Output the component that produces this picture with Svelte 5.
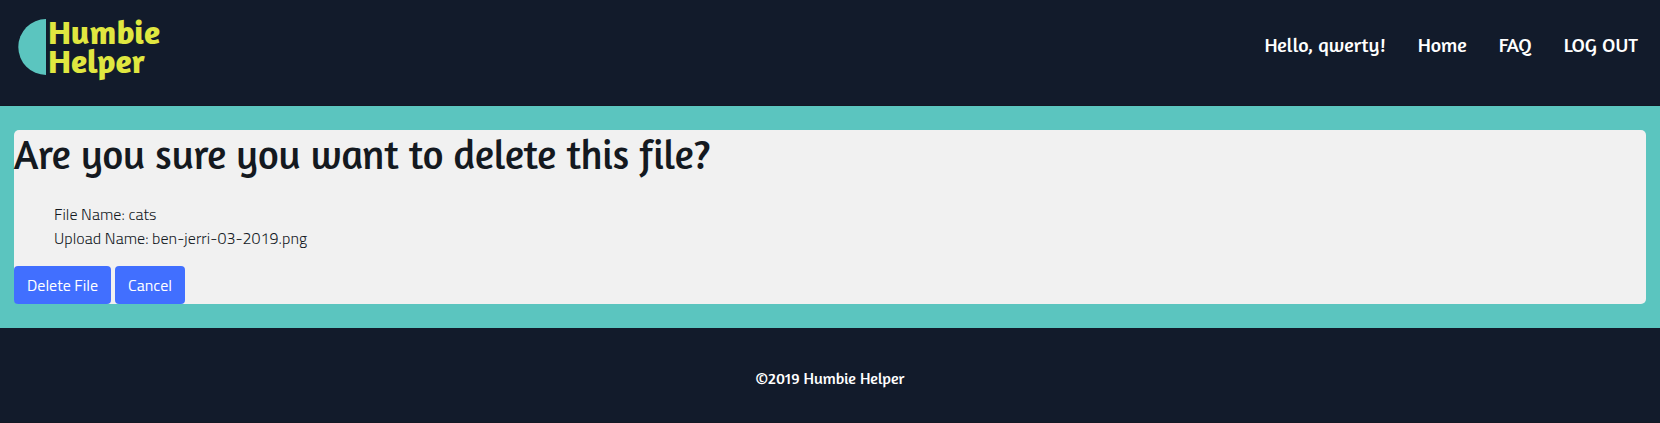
<script>
  const links = ['Hello, qwerty!', 'Home', 'FAQ', 'LOG OUT'];
  const details = ['File Name: cats', 'Upload Name: ben-jerri-03-2019.png'];
  const actions = ['Delete File', 'Cancel'];
</script>

<header>
  <svg class="logo" width="146" height="70" viewBox="0 0 146 70" role="img" aria-label="Humbie Helper">
    <path class="half" d="M32 9A27.7 28 0 0 0 32 65Z" />
    <text x="34" y="33.7" textLength="112" lengthAdjust="spacingAndGlyphs">Humbie</text>
    <text x="34" y="63.4" textLength="97" lengthAdjust="spacingAndGlyphs">Helper</text>
  </svg>
  <nav>
    {#each links as link}
      <a href="#top">{link}</a>
    {/each}
  </nav>
</header>
<main>
  <section>
    <h1>Are you sure you want to delete this file?</h1>
    <ul>
      {#each details as item}
        <li>{item}</li>
      {/each}
    </ul>
    <div class="actions">
      {#each actions as action}
        <button>{action}</button>
      {/each}
    </div>
  </section>
</main>
<footer>©2019 Humbie Helper</footer>

<style>
  :global(body) { margin: 0; background: #121b2b; }
  header {
    height: 106px;
    box-sizing: border-box;
    padding: 10px 22px 0 14px;
    display: flex;
    justify-content: space-between;
    background: #121b2b;
    border-bottom: 1px solid #121824;
  }
  .logo { display: block; overflow: visible; font: 700 33px Amaranth, Lato, sans-serif; fill: #e0e740; }
  .half { fill: #5bc5bf; }
  nav { display: flex; gap: 32px; padding-top: 20px; }
  nav a { text-decoration: none; font: 400 20px/30px Amaranth, Lato, sans-serif; color: #fff; }
  main { background: #5bc5bf; padding: 24px 14px; }
  section {
    height: 174px;
    background: #f1f1f1;
    border-radius: 5px;
    color: #14191f;
  }
  h1 { margin: 0 0 24px; font: 500 40px/48px Amaranth, Lato, sans-serif; }
  ul {
    list-style: none;
    margin: 0;
    padding: 0 0 16px 40px;
    font: 300 16px/24px "Titillium Web", "Open Sans", sans-serif;
    letter-spacing: 0.05px;
  }
  .actions { display: flex; gap: 4px; }
  button {
    height: 38px;
    padding: 7px 13px;
    border: 0;
    border-radius: 4px;
    background: #416fff;
    color: #fff;
    font: 400 16px/24px "Titillium Web", "Open Sans", sans-serif;
  }
  footer {
    height: 95px;
    box-sizing: border-box;
    padding-top: 38px;
    text-align: center;
    background: #121b2b;
    border-bottom: 1px solid #121824;
    font: 400 16px/24px Amaranth, Lato, sans-serif;
    color: #fff;
  }
</style>
